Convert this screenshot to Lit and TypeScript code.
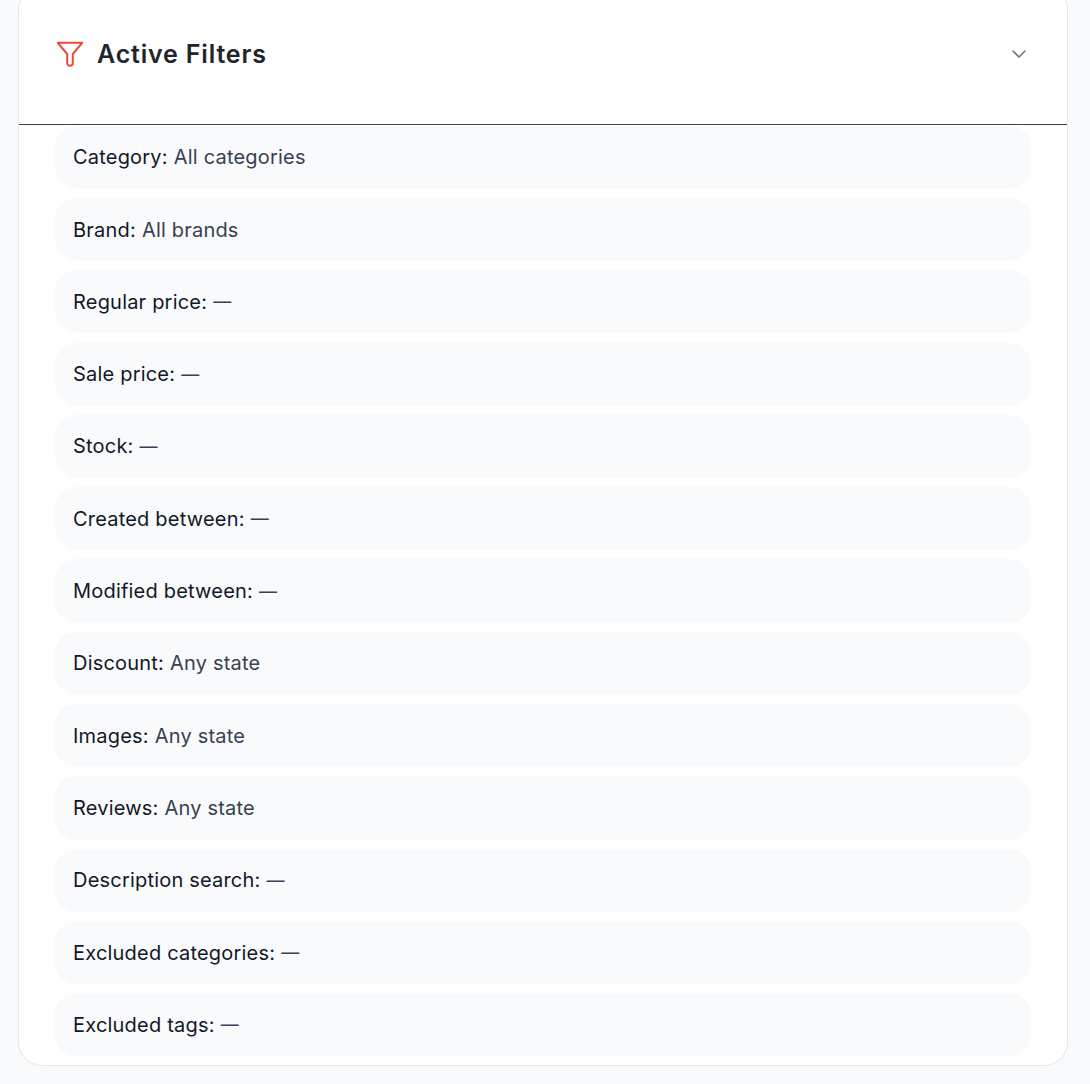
import { LitElement, css, html } from 'lit';
import { customElement } from 'lit/decorators.js';

const filters: [string, string][] = [
	['Category', 'All categories'],
	['Brand', 'All brands'],
	['Regular price', '—'],
	['Sale price', '—'],
	['Stock', '—'],
	['Created between', '—'],
	['Modified between', '—'],
	['Discount', 'Any state'],
	['Images', 'Any state'],
	['Reviews', 'Any state'],
	['Description search', '—'],
	['Excluded categories', '—'],
	['Excluded tags', '—']
];

@customElement('app-root')
export class AppRoot extends LitElement {
	static styles = css`
		:host {
			display: block;
			height: 1084px;
			overflow: hidden;
			background: #f9fafb;
			font-family: Inter, "Liberation Sans", sans-serif;
		}
		.page {
			padding: 0 22px 0 18px;
		}
		.card {
			margin-top: -14px;
			height: 1080px;
			box-sizing: border-box;
			background: #fff;
			border: 1px solid #e5e7eb;
			border-radius: 24px;
			overflow: hidden;
		}
		.head {
			height: 138px;
			box-sizing: border-box;
			border-bottom: 1px solid #374151;
			padding: 0 36px;
			display: flex;
			align-items: flex-start;
			justify-content: space-between;
		}
		.title {
			margin-top: 53px;
			display: flex;
			align-items: center;
			gap: 12px;
			height: 30px;
		}
		.title svg {
			display: block;
		}
		h2 {
			margin: 0 0 2px;
			font-size: 25px;
			font-weight: 600;
			line-height: 29px;
			color: #212529;
			letter-spacing: 0.82px;
		}
		.chev {
			margin-top: 59px;
			margin-right: 4px;
			display: block;
		}
		.list {
			display: flex;
			flex-direction: column;
			gap: 9.05px;
			padding: 0.65px 36px 0;
		}
		.row {
			height: 63.25px;
			flex: none;
			box-sizing: border-box;
			padding: 0 18px;
			display: flex;
			align-items: center;
			gap: 6px;
			background: #f9fafb;
			border-radius: 21px;
			font-size: 20px;
			letter-spacing: 0.2px;
			color: #374151;
		}
		.row b {
			font-weight: 400;
			color: #111827;
		}
		.row .dash {
			font-size: 18px;
			letter-spacing: 0;
		}
	`;

	render() {
		return html`
			<div class="page">
				<section class="card">
					<header class="head">
						<div class="title">
							<svg width="30" height="30" viewBox="0 0 30 30" fill="none" stroke="#ea4a3c" stroke-width="2" stroke-linecap="round" stroke-linejoin="round">
								<path d="M2.8 2.8h24.4l-9.4 11.2v9a2.8 2.8 0 0 1-5.6 0V14z"></path>
							</svg>
							<h2>Active Filters</h2>
						</div>
						<svg class="chev" width="16" height="16" viewBox="0 0 16 16" fill="none" stroke="#6b7280" stroke-width="1.6" stroke-linecap="round" stroke-linejoin="round">
							<path d="M2 5l6 6 6-6"></path>
						</svg>
					</header>
					<div class="list">
						${filters.map(([k, v]) => html`<div class="row"><b>${k}:</b><span class=${v === '—' ? 'dash' : ''}>${v}</span></div>`)}
					</div>
				</section>
			</div>
		`;
	}
}
